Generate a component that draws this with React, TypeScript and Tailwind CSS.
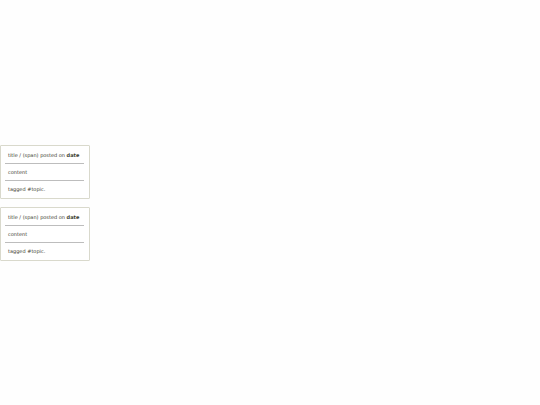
interface Post {
  id: number;
  title: string;
  date: string;
  content: string;
  topic: string;
}

const posts: Post[] = [
  { id: 1, title: "title / (span) posted on", date: "date", content: "content", topic: "tagged #topic." },
  { id: 2, title: "title / (span) posted on", date: "date", content: "content", topic: "tagged #topic." },
];

function PostCard({ post }: { post: Post }) {
  return (
    <article className="min-w-[90px] rounded-[1px] border border-[#d9d9cc] bg-white pr-[5px] pl-1">
      <header className="px-[3px] pt-[3px] pb-0.5">
        {post.title} <b>{post.date}</b>
      </header>
      <p className="border-y border-[#bdbdbd] px-[3px] py-0.5">{post.content}</p>
      <footer className="px-[3px] pt-0.5 pb-[3px]">{post.topic}</footer>
    </article>
  );
}

export default function App() {
  return (
    <main className="flex min-h-screen flex-col items-start justify-center gap-2 bg-[#fefefe] font-['DejaVu_Sans',Verdana,sans-serif] text-[5px] leading-[12px] text-[#3c4130]">
      {posts.map((post) => (
        <PostCard key={post.id} post={post} />
      ))}
    </main>
  );
}
